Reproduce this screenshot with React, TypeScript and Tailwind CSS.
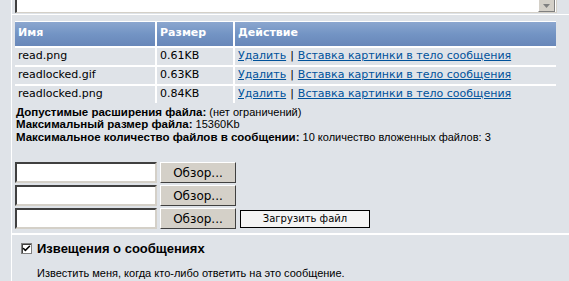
import { Check } from "lucide-react";

const FILES = [
  { name: "read.png", size: "0.61KB" },
  { name: "readlocked.gif", size: "0.63KB" },
  { name: "readlocked.png", size: "0.84KB" },
];

function FileRow() {
  return (
    <div className="flex h-[21px] items-center gap-[3px]">
      <div className="h-[21px] w-[142px] border-2 border-t-[#404040] border-l-[#404040] border-r-[#d4d0c8] border-b-[#d4d0c8] bg-white" />
      <button className="h-[21px] w-[76px] border border-t-white border-l-white border-r-[#404040] border-b-[#404040] bg-[#d4d0c8] font-['DejaVu_Sans',sans-serif] text-[12px] text-black">
        Обзор...
      </button>
    </div>
  );
}

const HEAD = "flex h-[24px] items-center bg-gradient-to-b from-[#8ba6cf] via-[#7394c4] to-[#6887b9] px-[3px] font-bold text-white";
const CELL = "flex h-[17px] items-center bg-[#dfe3e8] px-[3px]";

export default function App() {
  return (
    <div className="flex h-[281px] w-[569px] overflow-hidden bg-[#dfe3e8] font-['Liberation_Sans',sans-serif] text-[11px] text-black">
      {/* left gutter */}
      <div className="w-[12px] shrink-0 border-r border-white" />

      <div className="flex min-w-0 flex-1 flex-col">
        {/* cut-off select at the top */}
        <div className="flex h-[15px] border-b border-white pl-[3px] pr-[12px]">
          <div className="flex h-[13px] flex-1 items-end justify-end border-b border-l-2 border-r border-b-[#d4d0c8] border-l-[#404040] border-r-[#d4d0c8] bg-white pr-[1px]">
            <div className="flex h-[12px] w-[17px] items-center justify-center border border-t-0 border-l-white border-r-[#808080] border-b-[#808080] bg-[#d4d0c8]">
              <svg width="7" height="4" viewBox="0 0 7 4">
                <path d="M0 0h7L3.5 4z" fill="#808080" />
              </svg>
            </div>
          </div>
        </div>

        {/* attachments table */}
        <div className="mt-[6px] pl-[3px] pr-[13px] font-['DejaVu_Sans',sans-serif]">
          <div className="grid grid-cols-[140px_76px_1fr] gap-[2px] bg-white pt-[1px]">
            <div className={HEAD}>Имя</div>
            <div className={HEAD}>Размер</div>
            <div className={HEAD}>Действие</div>
            {FILES.map((f) => (
              <>
                <div key={f.name + "n"} className={CELL}>
                  {f.name}
                </div>
                <div key={f.name + "s"} className={CELL}>
                  {f.size}
                </div>
                <div key={f.name + "a"} className={`${CELL} gap-[4px]`}>
                  <a className="text-[#00529b] underline">Удалить</a>
                  <span>|</span>
                  <a className="text-[#00529b] underline">Вставка картинки в тело сообщения</a>
                </div>
              </>
            ))}
          </div>
        </div>

        {/* limits */}
        <div className="mt-[3px] flex flex-col pl-[4px] leading-[12.5px]">
          <div>
            <b className="text-[11.5px]">Допустимые расширения файла:</b> (нет ограничений)
          </div>
          <div>
            <b className="text-[11.5px]">Максимальный размер файла:</b> 15360Kb
          </div>
          <div>
            <b className="text-[11.5px]">Максимальное количество файлов в сообщении:</b> 10 количество вложенных файлов: 3
          </div>
        </div>

        {/* upload fields */}
        <div className="mt-[19px] flex flex-col gap-[2px] pl-[3px]">
          <FileRow />
          <FileRow />
          <div className="flex items-center gap-[4px]">
            <FileRow />
            <button className="h-[18px] w-[130px] border border-black bg-[#f4f4f4] font-['DejaVu_Sans',sans-serif] text-[10px] text-black">
              Загрузить файл
            </button>
          </div>
        </div>

        {/* notifications */}
        <div className="mt-[4px] flex flex-col border-t-2 border-white pl-[9px] pt-[4px]">
          <label className="flex items-center gap-[5px] text-[13px] font-bold">
            <span className="flex h-[11px] w-[11px] items-center justify-center border border-[#808080] bg-white shadow-[inset_1px_1px_0_#404040]">
              <Check size={9} strokeWidth={4} />
            </span>
            Извещения о сообщениях
          </label>
          <div className="mt-[6px] pl-[16px]">Известить меня, когда кто-либо ответить на это сообщение.</div>
        </div>
      </div>
    </div>
  );
}
